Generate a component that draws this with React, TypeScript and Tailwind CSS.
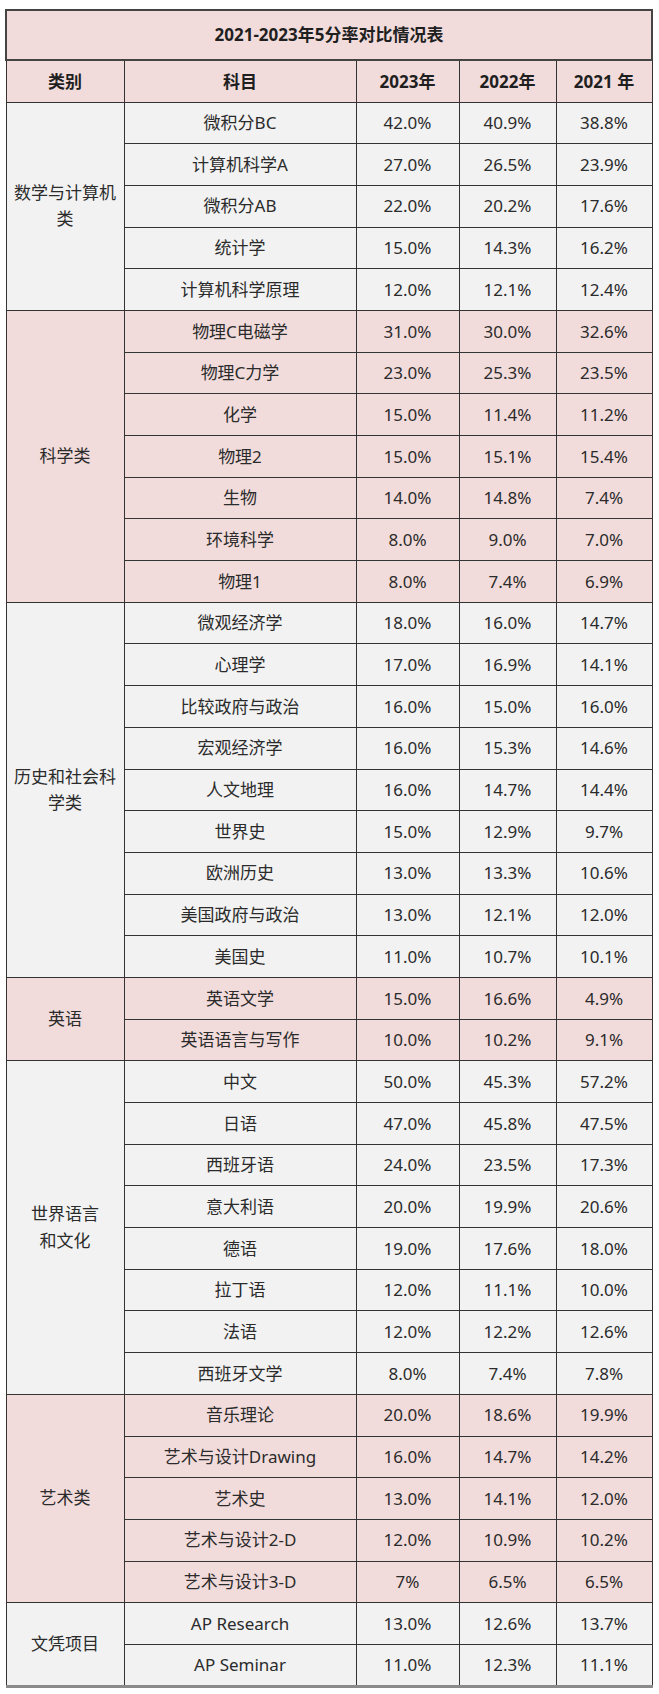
import { Fragment } from 'react';

type Row = [string, string, string, string];

interface Group {
  name: string[];
  tone: 'gray' | 'pink';
  rows: Row[];
}

const groups: Group[] = [
  {
    name: ['数学与计算机', '类'],
    tone: 'gray',
    rows: [
      ['微积分BC', '42.0%', '40.9%', '38.8%'],
      ['计算机科学A', '27.0%', '26.5%', '23.9%'],
      ['微积分AB', '22.0%', '20.2%', '17.6%'],
      ['统计学', '15.0%', '14.3%', '16.2%'],
      ['计算机科学原理', '12.0%', '12.1%', '12.4%'],
    ],
  },
  {
    name: ['科学类'],
    tone: 'pink',
    rows: [
      ['物理C电磁学', '31.0%', '30.0%', '32.6%'],
      ['物理C力学', '23.0%', '25.3%', '23.5%'],
      ['化学', '15.0%', '11.4%', '11.2%'],
      ['物理2', '15.0%', '15.1%', '15.4%'],
      ['生物', '14.0%', '14.8%', '7.4%'],
      ['环境科学', '8.0%', '9.0%', '7.0%'],
      ['物理1', '8.0%', '7.4%', '6.9%'],
    ],
  },
  {
    name: ['历史和社会科', '学类'],
    tone: 'gray',
    rows: [
      ['微观经济学', '18.0%', '16.0%', '14.7%'],
      ['心理学', '17.0%', '16.9%', '14.1%'],
      ['比较政府与政治', '16.0%', '15.0%', '16.0%'],
      ['宏观经济学', '16.0%', '15.3%', '14.6%'],
      ['人文地理', '16.0%', '14.7%', '14.4%'],
      ['世界史', '15.0%', '12.9%', '9.7%'],
      ['欧洲历史', '13.0%', '13.3%', '10.6%'],
      ['美国政府与政治', '13.0%', '12.1%', '12.0%'],
      ['美国史', '11.0%', '10.7%', '10.1%'],
    ],
  },
  {
    name: ['英语'],
    tone: 'pink',
    rows: [
      ['英语文学', '15.0%', '16.6%', '4.9%'],
      ['英语语言与写作', '10.0%', '10.2%', '9.1%'],
    ],
  },
  {
    name: ['世界语言', '和文化'],
    tone: 'gray',
    rows: [
      ['中文', '50.0%', '45.3%', '57.2%'],
      ['日语', '47.0%', '45.8%', '47.5%'],
      ['西班牙语', '24.0%', '23.5%', '17.3%'],
      ['意大利语', '20.0%', '19.9%', '20.6%'],
      ['德语', '19.0%', '17.6%', '18.0%'],
      ['拉丁语', '12.0%', '11.1%', '10.0%'],
      ['法语', '12.0%', '12.2%', '12.6%'],
      ['西班牙文学', '8.0%', '7.4%', '7.8%'],
    ],
  },
  {
    name: ['艺术类'],
    tone: 'pink',
    rows: [
      ['音乐理论', '20.0%', '18.6%', '19.9%'],
      ['艺术与设计Drawing', '16.0%', '14.7%', '14.2%'],
      ['艺术史', '13.0%', '14.1%', '12.0%'],
      ['艺术与设计2-D', '12.0%', '10.9%', '10.2%'],
      ['艺术与设计3-D', '7%', '6.5%', '6.5%'],
    ],
  },
  {
    name: ['文凭项目'],
    tone: 'gray',
    rows: [
      ['AP Research', '13.0%', '12.6%', '13.7%'],
      ['AP Seminar', '11.0%', '12.3%', '11.1%'],
    ],
  },
];

const cell = 'border border-[#333] text-center align-middle p-0';

export default function App() {
  return (
    <div
      className="min-h-[1694px] bg-white pl-[5px] pt-[9px]"
      style={{ fontFamily: '"Noto Sans", "Noto Sans CJK SC", sans-serif' }}
    >
      <table className="w-[646px] table-fixed border-collapse border-b-[3px] border-b-[#8a8a8a] text-[17px] text-[#2b2b2b]">
        <colgroup>
          <col className="w-[118px]" />
          <col className="w-[232px]" />
          <col className="w-[103px]" />
          <col className="w-[97px]" />
          <col className="w-[96px]" />
        </colgroup>
        <thead>
          <tr className="h-[50px] bg-[#f2dcdb]">
            <th colSpan={5} className={`${cell} border-2 border-[#444] font-bold text-[#1f1f1f]`}>
              2021-2023年5分率对比情况表
            </th>
          </tr>
          <tr className="h-[42px] bg-[#f2dcdb] font-bold text-[#1f1f1f]">
            <th className={cell}>类别</th>
            <th className={cell}>科目</th>
            <th className={cell}>2023年</th>
            <th className={cell}>2022年</th>
            <th className={cell}>2021 年</th>
          </tr>
        </thead>
        <tbody>
          {groups.map(g => {
            const bg = g.tone === 'pink' ? 'bg-[#f2dcdb]' : 'bg-[#f2f2f2]';
            return (
              <Fragment key={g.name.join('')}>
                {g.rows.map((r, i) => (
                  <tr key={r[0]} className={`h-[41.7px] ${bg}`}>
                    {i === 0 && (
                      <td rowSpan={g.rows.length} className={`${cell} leading-[1.55]`}>
                        {g.name.map((line, j) => (
                          <div key={j}>{line}</div>
                        ))}
                      </td>
                    )}
                    {r.map((v, k) => (
                      <td key={k} className={cell}>
                        {v}
                      </td>
                    ))}
                  </tr>
                ))}
              </Fragment>
            );
          })}
        </tbody>
      </table>
    </div>
  );
}
